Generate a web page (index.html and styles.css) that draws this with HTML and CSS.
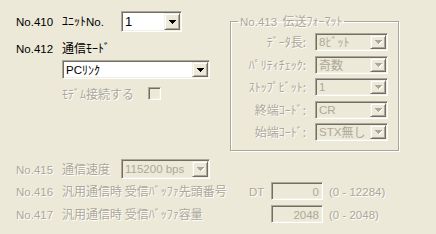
FILE: index.html
```html
<!DOCTYPE html>
<html lang="ja">
<head>
<meta charset="utf-8">
<link rel="stylesheet" href="styles.css">
</head>
<body>
<div class="dlg">
  <div class="top">
    <div class="left">
      <div class="row r410">
        <span class="no"><span class="en">No.410</span></span>
        <span class="lbl w59">ﾕﾆｯﾄ<span class="en">No.</span></span>
        <div class="combo unit">
          <span class="val"><span class="en">1</span></span>
          <span class="btn"><svg width="7" height="4" shape-rendering="crispEdges"><rect x="0" y="0" width="7" height="1"/><rect x="1" y="1" width="5" height="1"/><rect x="2" y="2" width="3" height="1"/><rect x="3" y="3" width="1" height="1"/></svg></span>
        </div>
      </div>
      <div class="row r412">
        <span class="no"><span class="en">No.412</span></span>
        <span class="lbl">通信ﾓｰﾄﾞ</span>
      </div>
      <div class="combo mode">
        <span class="val"><span class="en">PC</span>ﾘﾝｸ</span>
        <span class="btn"><svg width="7" height="4" shape-rendering="crispEdges"><rect x="0" y="0" width="7" height="1"/><rect x="1" y="1" width="5" height="1"/><rect x="2" y="2" width="3" height="1"/><rect x="3" y="3" width="1" height="1"/></svg></span>
      </div>
      <div class="row modem">
        <span class="lbl dis w86">ﾓﾃﾞﾑ接続する</span>
        <span class="check"></span>
      </div>
    </div>
    <fieldset class="group">
      <legend class="dis"><span class="en">No.413</span>&nbsp;&nbsp;伝送ﾌｫｰﾏｯﾄ</legend>
      <div class="fmt">
        <span class="flbl dis">ﾃﾞｰﾀ長:</span>
        <div class="combo off"><span class="val"><span class="en">8</span>ﾋﾞｯﾄ</span><span class="btn"><svg width="8" height="5" shape-rendering="crispEdges"><g class="sh"><rect x="1" y="1" width="7" height="1"/><rect x="2" y="2" width="5" height="1"/><rect x="3" y="3" width="3" height="1"/><rect x="4" y="4" width="1" height="1"/></g><g class="ar"><rect x="0" y="0" width="7" height="1"/><rect x="1" y="1" width="5" height="1"/><rect x="2" y="2" width="3" height="1"/><rect x="3" y="3" width="1" height="1"/></g></svg></span></div>
        <span class="flbl dis">ﾊﾟﾘﾃｨﾁｪｯｸ:</span>
        <div class="combo off"><span class="val">奇数</span><span class="btn"><svg width="8" height="5" shape-rendering="crispEdges"><g class="sh"><rect x="1" y="1" width="7" height="1"/><rect x="2" y="2" width="5" height="1"/><rect x="3" y="3" width="3" height="1"/><rect x="4" y="4" width="1" height="1"/></g><g class="ar"><rect x="0" y="0" width="7" height="1"/><rect x="1" y="1" width="5" height="1"/><rect x="2" y="2" width="3" height="1"/><rect x="3" y="3" width="1" height="1"/></g></svg></span></div>
        <span class="flbl dis">ｽﾄｯﾌﾟﾋﾞｯﾄ:</span>
        <div class="combo off"><span class="val"><span class="en">1</span></span><span class="btn"><svg width="8" height="5" shape-rendering="crispEdges"><g class="sh"><rect x="1" y="1" width="7" height="1"/><rect x="2" y="2" width="5" height="1"/><rect x="3" y="3" width="3" height="1"/><rect x="4" y="4" width="1" height="1"/></g><g class="ar"><rect x="0" y="0" width="7" height="1"/><rect x="1" y="1" width="5" height="1"/><rect x="2" y="2" width="3" height="1"/><rect x="3" y="3" width="1" height="1"/></g></svg></span></div>
        <span class="flbl dis">終端ｺｰﾄﾞ:</span>
        <div class="combo off"><span class="val"><span class="en">CR</span></span><span class="btn"><svg width="8" height="5" shape-rendering="crispEdges"><g class="sh"><rect x="1" y="1" width="7" height="1"/><rect x="2" y="2" width="5" height="1"/><rect x="3" y="3" width="3" height="1"/><rect x="4" y="4" width="1" height="1"/></g><g class="ar"><rect x="0" y="0" width="7" height="1"/><rect x="1" y="1" width="5" height="1"/><rect x="2" y="2" width="3" height="1"/><rect x="3" y="3" width="1" height="1"/></g></svg></span></div>
        <span class="flbl dis">始端ｺｰﾄﾞ:</span>
        <div class="combo off"><span class="val"><span class="en">STX</span>無し</span><span class="btn"><svg width="8" height="5" shape-rendering="crispEdges"><g class="sh"><rect x="1" y="1" width="7" height="1"/><rect x="2" y="2" width="5" height="1"/><rect x="3" y="3" width="3" height="1"/><rect x="4" y="4" width="1" height="1"/></g><g class="ar"><rect x="0" y="0" width="7" height="1"/><rect x="1" y="1" width="5" height="1"/><rect x="2" y="2" width="3" height="1"/><rect x="3" y="3" width="1" height="1"/></g></svg></span></div>
      </div>
    </fieldset>
  </div>

  <div class="bottom">
    <div class="row r415">
      <span class="no dis"><span class="en">No.415</span></span>
      <span class="lbl dis w59">通信速度</span>
      <div class="combo off speed"><span class="val"><span class="en">115200 bps</span></span><span class="btn"><svg width="8" height="5" shape-rendering="crispEdges"><g class="sh"><rect x="1" y="1" width="7" height="1"/><rect x="2" y="2" width="5" height="1"/><rect x="3" y="3" width="3" height="1"/><rect x="4" y="4" width="1" height="1"/></g><g class="ar"><rect x="0" y="0" width="7" height="1"/><rect x="1" y="1" width="5" height="1"/><rect x="2" y="2" width="3" height="1"/><rect x="3" y="3" width="1" height="1"/></g></svg></span></div>
    </div>
    <div class="row r416">
      <span class="no dis"><span class="en">No.416</span></span>
      <span class="lbl dis w187">汎用通信時 受信ﾊﾞｯﾌｧ先頭番号</span>
      <span class="lbl dis w22"><span class="en">DT</span></span>
      <span class="edit"><span class="en">0</span></span>
      <span class="range dis"><span class="en">(0 - 12284)</span></span>
    </div>
    <div class="row r417">
      <span class="no dis"><span class="en">No.417</span></span>
      <span class="lbl dis w209">汎用通信時 受信ﾊﾞｯﾌｧ容量</span>
      <span class="edit"><span class="en">2048</span></span>
      <span class="range dis"><span class="en">(0 - 2048)</span></span>
    </div>
  </div>
</div>
</body>
</html>
```

FILE: styles.css
```css
html, body {
  margin: 0;
  padding: 0;
}
body {
  width: 436px;
  height: 234px;
  overflow: hidden;
  background: #ECE9D8;
  color: #000;
  font-family: "Noto Sans CJK JP", sans-serif;
  font-size: 12px;
  line-height: 14px;
}
.en {
  font-family: "Liberation Sans", "Noto Sans CJK JP", sans-serif;
  font-size: 11.5px;
}
.dlg {
  padding: 11px 0 0 16px;
}
.top {
  display: flex;
  align-items: flex-start;
}
.left {
  width: 214px;
  flex: none;
}
.row {
  display: flex;
  align-items: center;
  white-space: nowrap;
}
.no {
  width: 46px;
  flex: none;
}
.lbl {
  flex: none;
}
.w59 { width: 59px; }
.w86 { width: 86px; }
.w187 { width: 187px; }
.w22 { width: 22px; }
.w209 { width: 209px; }
.dis {
  color: #ACA899;
  text-shadow: 1px 1px 0 #fff;
}
.r410 {
  height: 21px;
}
.r412 {
  margin-top: 8px;
  height: 16px;
}
.modem {
  margin-top: 8px;
  margin-left: 46px;
  height: 13px;
}

/* combo box */
.combo {
  box-sizing: border-box;
  display: flex;
  flex: none;
  border: 1px solid;
  border-color: #ACA899 #fff #fff #ACA899;
  box-shadow: inset 1px 1px 0 #716F64, inset -1px -1px 0 #F1EFE2;
  background: #fff;
  padding: 1px;
}
.combo .val {
  flex: 1;
  display: flex;
  align-items: center;
  padding-left: 2px;
  white-space: nowrap;
  line-height: 12px;
}
.combo .btn {
  box-sizing: border-box;
  width: 16px;
  flex: none;
  display: flex;
  align-items: center;
  justify-content: center;
  border: 1px solid;
  border-color: #F1EFE2 #716F64 #716F64 #F1EFE2;
  box-shadow: inset 1px 1px 0 #fff, inset -1px -1px 0 #ACA899;
  background: #ECE9D8;
}
.combo .btn svg {
  display: block;
  fill: #000;
}
.combo.off {
  background: #ECE9D8;
  color: #ACA899;
}
.combo.off .sh { fill: #fff; }
.combo.off .ar { fill: #ACA899; }
.combo.off .btn svg { margin-left: 1px; margin-top: 1px; }

.unit {
  width: 61px;
  height: 21px;
}
.unit .en {
  font-size: 13px;
}
.mode {
  margin-top: 4px;
  margin-left: 46px;
  width: 148px;
  height: 19px;
}

/* checkbox */
.check {
  box-sizing: border-box;
  width: 13px;
  height: 13px;
  border: 1px solid;
  border-color: #ACA899 #fff #fff #ACA899;
  box-shadow: inset 1px 1px 0 #716F64, inset -1px -1px 0 #F1EFE2;
  background: #ECE9D8;
}

/* group box */
.group {
  box-sizing: border-box;
  width: 169px;
  margin: 3px 0 0 0;
  padding: 0;
  min-inline-size: 0;
  border: 1px solid #ACA899;
  box-shadow: inset 1px 1px 0 #fff, 1px 1px 0 #fff;
}
.group legend {
  margin-left: 7px;
  padding: 0 2px;
  line-height: 14px;
}
.fmt {
  display: grid;
  grid-template-columns: 75px 73px;
  column-gap: 9px;
  row-gap: 4.5px;
  padding: 4px 0 9px 0;
  align-items: center;
}
.flbl {
  text-align: right;
  white-space: nowrap;
}
.fmt .combo {
  height: 18px;
}

/* bottom rows */
.bottom {
  margin-top: 8px;
}
.r415 {
  height: 20px;
}
.speed {
  width: 89px;
  height: 20px;
}
.r416 {
  margin-top: 3px;
  height: 18px;
}
.r417 {
  margin-top: 5px;
  height: 18px;
}
.edit {
  box-sizing: border-box;
  width: 52px;
  height: 18px;
  flex: none;
  border: 1px solid;
  border-color: #ACA899 #fff #fff #ACA899;
  box-shadow: inset 1px 1px 0 #716F64, inset -1px -1px 0 #F1EFE2;
  background: #ECE9D8;
  color: #ACA899;
  text-align: right;
  padding: 1px 3px 0 0;
  line-height: 14px;
}
.range {
  padding-left: 6px;
}
```
